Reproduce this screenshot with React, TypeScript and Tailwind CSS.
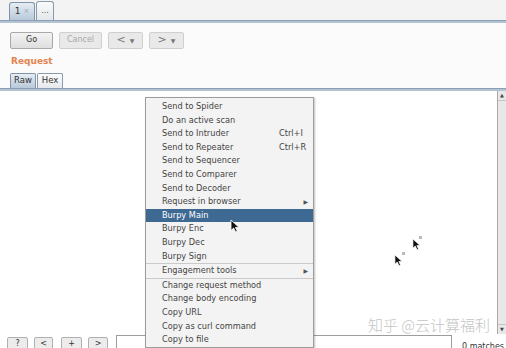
const menuTop = [
  { label: "Send to Spider" },
  { label: "Do an active scan" },
  { label: "Send to Intruder", key: "Ctrl+I" },
  { label: "Send to Repeater", key: "Ctrl+R" },
  { label: "Send to Sequencer" },
  { label: "Send to Comparer" },
  { label: "Send to Decoder" },
  { label: "Request in browser", sub: true },
  { label: "Burpy Main", active: true },
  { label: "Burpy Enc" },
  { label: "Burpy Dec" },
  { label: "Burpy Sign" },
]

const menuBottom = [
  { label: "Change request method" },
  { label: "Change body encoding" },
  { label: "Copy URL" },
  { label: "Copy as curl command" },
  { label: "Copy to file" },
]

type Item = { label: string; key?: string; sub?: boolean; active?: boolean }

const MenuRow = ({ item }: { item: Item }) => (
  <div
    className={`relative h-[13.6px] pl-[16px] text-[8.2px] leading-[13.6px] whitespace-nowrap ${
      item.active ? "bg-[#3d6993] text-white" : "text-[#444]"
    }`}
  >
    {item.label}
    {item.key && <span className="absolute left-[133px] top-0">{item.key}</span>}
    {item.sub && <span className="absolute right-[5px] top-0 text-[6px] text-[#555]">▶</span>}
  </div>
)

const Btn = ({ children, disabled, w }: { children: React.ReactNode; disabled?: boolean; w: string }) => (
  <div
    className={`flex h-[17px] ${w} items-center justify-center rounded-[2px] border text-[8px] ${
      disabled
        ? "border-[#cfcfcf] bg-[#e9e9e9] text-[#a8a8a8]"
        : "border-[#a9a9a9] bg-gradient-to-b from-[#f4f4f4] to-[#dedede] text-[#333]"
    }`}
  >
    {children}
  </div>
)

const Cursor = ({ className, size = 1 }: { className: string; size?: number }) => (
  <svg className={`absolute ${className}`} width={10 * size} height={14 * size} viewBox="0 0 10 14">
    <path d="M1 1 L1 11.5 L3.6 9 L5.6 13 L7.3 12.2 L5.4 8.4 L9 8.4 Z" fill="#111" stroke="#fff" strokeWidth="0.8" />
  </svg>
)

export default function App() {
  return (
    <div className="relative flex h-[348px] w-[506px] flex-col overflow-hidden bg-white font-['DejaVu_Sans',sans-serif] text-[#333]">
      {/* request tabs */}
      <div className="flex h-[20px] items-end gap-[1px] bg-[#f3f3f3] pl-[9px]">
        <div className="flex h-[18px] w-[26px] items-center justify-center gap-[3px] rounded-t-[3px] border border-b-0 border-[#8193a8] bg-gradient-to-b from-[#e6edf4] to-[#b8c9da] text-[9px]">
          <span>1</span>
          <span className="text-[7px] text-[#99a6b3]">×</span>
        </div>
        <div className="flex h-[19px] w-[18px] items-center justify-center rounded-t-[3px] border border-b-0 border-[#8a9aab] bg-gradient-to-b from-[#fafafa] to-[#e4e8ec] text-[8px] text-[#555]">
          ...
        </div>
      </div>
      <div className="h-[3px] border-t border-[#8c9eb1] bg-[#b4c3d1]" />

      {/* toolbar + request header */}
      <div className="flex h-[66px] flex-col bg-[#fbfbfb] pl-[10px]">
        <div className="mt-[9px] flex gap-[6px]">
          <Btn w="w-[43px]">Go</Btn>
          <Btn w="w-[43px]" disabled>Cancel</Btn>
          <Btn w="w-[35px]" disabled>
            <span className="text-[11px] text-[#777]">&lt;</span>
            <span className="ml-[4px] text-[6px] text-[#777]">▼</span>
          </Btn>
          <Btn w="w-[35px]" disabled>
            <span className="text-[11px] text-[#777]">&gt;</span>
            <span className="ml-[4px] text-[6px] text-[#777]">▼</span>
          </Btn>
        </div>
        <div className="mt-[7px] ml-[1px] text-[9px] leading-[11px] font-bold text-[#e4834f]">Request</div>
        <div className="mt-[6px] flex items-end gap-[1px]">
          <div className="flex h-[15px] w-[26px] items-center justify-center rounded-t-[2px] border border-b-0 border-[#8193a8] bg-gradient-to-b from-[#e6edf4] to-[#b8c9da] text-[8.5px]">
            Raw
          </div>
          <div className="flex h-[15px] w-[26px] items-center justify-center rounded-t-[2px] border border-b-0 border-[#8a9aab] bg-gradient-to-b from-[#fcfcfc] to-[#e6e9ed] text-[8.5px]">
            Hex
          </div>
        </div>
      </div>
      <div className="h-[3px] border-t border-[#8c9eb1] bg-[#b4c3d1]" />

      {/* editor */}
      <div className="flex h-[245px]">
        <div className="flex-1 bg-white" />
        <div className="flex w-[9px] flex-col border-l border-[#a9a9a9] bg-[#e8e8e8]">
          <div className="flex h-[10px] items-center justify-center border-b border-[#c4c4c4] text-[5px] text-[#444]">▲</div>
          <div className="flex-1" />
          <div className="flex h-[10px] items-center justify-center border-t border-[#c4c4c4] text-[5px] text-[#444]">▼</div>
        </div>
      </div>

      {/* search bar */}
      <div className="flex h-[14px] items-start gap-[6px] pl-[7px]">
        <div className="mt-[3px] flex h-[14px] w-[21px] justify-center rounded-[2px] border border-[#b0b0b0] bg-[#ececec] text-[8px] leading-[12px]">?</div>
        <div className="mt-[3px] flex h-[14px] w-[19px] justify-center rounded-[2px] border border-[#b0b0b0] bg-[#ececec] text-[8px] leading-[12px]">&lt;</div>
        <div className="mt-[3px] ml-[2px] flex h-[14px] w-[21px] justify-center rounded-[2px] border border-[#b0b0b0] bg-[#ececec] text-[8px] leading-[12px]">+</div>
        <div className="mt-[3px] flex h-[14px] w-[20px] justify-center rounded-[2px] border border-[#b0b0b0] bg-[#ececec] text-[8px] leading-[12px]">&gt;</div>
        <div className="mt-[1px] ml-[2px] h-[14px] w-[336px] border border-[#9d9d9d] bg-white" />
        <div className="mt-[7px] ml-[4px] text-[8px] text-[#333]">0 matches</div>
      </div>

      {/* context menu */}
      <div className="absolute left-[145px] top-[97px] w-[169px] border border-[#9c9c9c] bg-[#f3f3f3] pt-[2px] shadow-[1px_1px_2px_rgba(0,0,0,0.25)]">
        {menuTop.map((it) => (
          <MenuRow key={it.label} item={it} />
        ))}
        <div className="h-[1px] bg-[#cacaca]" />
        <MenuRow item={{ label: "Engagement tools", sub: true }} />
        <div className="h-[1px] bg-[#cacaca]" />
        {menuBottom.map((it) => (
          <MenuRow key={it.label} item={it} />
        ))}
      </div>

      {/* pointers */}
      <Cursor className="left-[230px] top-[219px]" />
      <Cursor className="left-[412px] top-[238px]" size={0.9} />
      <Cursor className="left-[394px] top-[254px]" size={0.9} />
      <div className="absolute left-[419px] top-[236px] h-[3px] w-[3px] bg-[#bbb]" />
      <div className="absolute left-[402px] top-[252px] h-[3px] w-[3px] bg-[#bbb]" />

      {/* watermark */}
      <div className="absolute left-[368px] top-[315px] text-[15px] leading-[20px] text-[#c4c4c4] font-['Noto_Sans_CJK_SC',sans-serif] font-light whitespace-nowrap">
        知乎 @云计算福利
      </div>
    </div>
  )
}
